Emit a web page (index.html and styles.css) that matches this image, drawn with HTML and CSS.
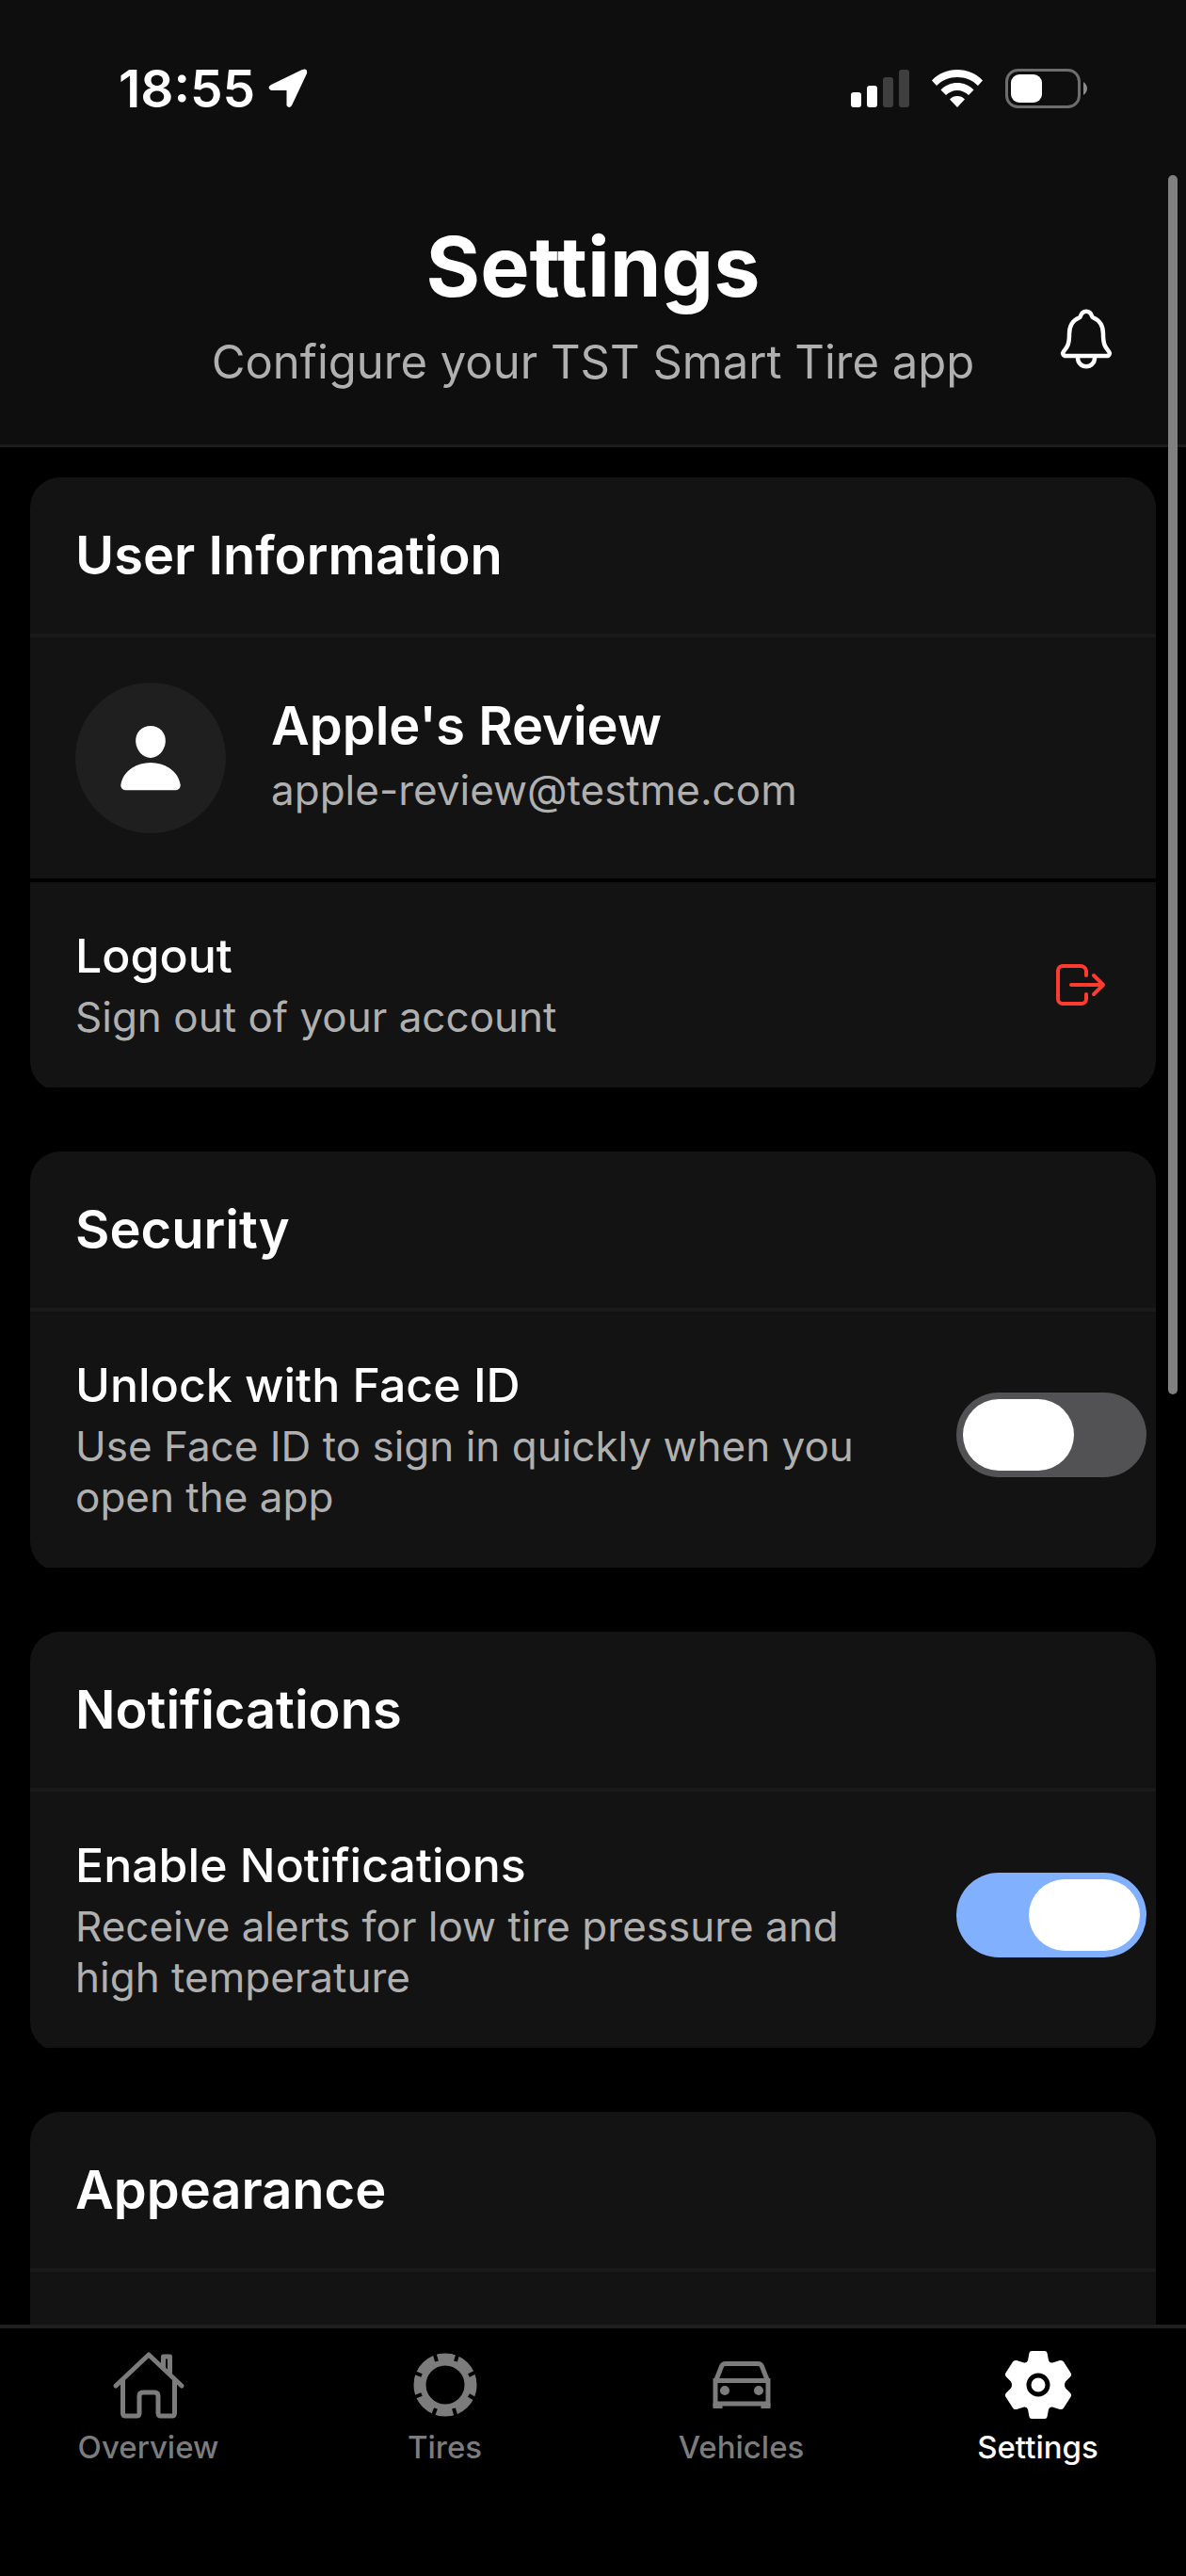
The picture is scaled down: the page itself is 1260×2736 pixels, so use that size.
FILE: index.html
```html
<!DOCTYPE html>
<html lang="en">
<head>
  <meta charset="UTF-8" />
  <meta name="viewport" content="width=device-width, initial-scale=1.0"/>
  <title>TST Smart Tire - Settings</title>
  <link rel="stylesheet" href="styles.css">
</head>
<body>
  <div class="app">
    <div class="status-bar">
      <div class="status-left">
        <span class="time">18:55</span>
        <svg class="location" viewBox="0 0 42 42" aria-hidden="true">
          <path d="M3 17 L36 1 Q42 -1 41 5 L25 39 Q22 43 19.500 39 L19.500 23 L3 23 Q-2 20 3 17z" fill="#fff"/>
        </svg>
      </div>
      <div class="status-right">
        <svg class="signal" viewBox="0 0 62 40" aria-hidden="true">
          <rect x="0" y="24" width="11" height="16" rx="3" fill="#fff"/>
          <rect x="17" y="17" width="11" height="23" rx="3" fill="#fff"/>
          <rect x="34" y="8" width="11" height="32" rx="3" fill="#3f3f3f"/>
          <rect x="51" y="0" width="11" height="40" rx="3" fill="#3f3f3f"/>
        </svg>
        <svg class="wifi" viewBox="0 0 54 40" aria-hidden="true">
          <path d="M27 0C16.500 0 7 4 0 11.500L5 17C11 11 18.500 8 27 8s16 3 22 9l5-5.500C47 4 37.500 0 27 0z" fill="#fff"/>
          <path d="M27 14C20.500 14 14 16.500 9.500 21.500L15 27C18 24 22.500 22 27 22s9 2 12 5l5.500-5.500C40 16.500 33.500 14 27 14z" fill="#fff"/>
          <path d="M27 28C24 28 21 29 19 31.500L27 40l8-8.500C33 29 30 28 27 28z" fill="#fff"/>
        </svg>
        <svg class="battery" viewBox="0 0 88 42" aria-hidden="true">
          <rect x="1.500" y="1.500" width="77" height="39" rx="12" fill="none" stroke="#6d6d6d" stroke-width="3"/>
          <rect x="6" y="6" width="33" height="30" rx="9" fill="#fff"/>
          <path d="M83 14Q87 17 87 21T83 28z" fill="#8a8a8a"/>
        </svg>
      </div>
    </div>

    <header class="header">
      <div class="header-text">
        <h1>Settings</h1>
        <p>Configure your TST Smart Tire app</p>
      </div>
      <button class="bell" type="button" aria-label="Notifications">
        <svg viewBox="0 0 512 512" fill="none" stroke="#fff" stroke-width="32" stroke-linecap="round" stroke-linejoin="round">
          <path d="M427.680 351.430C402 320 383.870 304 383.870 217.350 383.870 138 343.350 109.730 310 96c-4.430-1.820-8.600-6-9.950-10.550C294.200 65.540 277.800 48 256 48s-38.210 17.550-44 37.470c-1.350 4.600-5.520 8.710-9.950 10.530-33.390 13.750-73.870 41.920-73.870 121.350C128.130 304 110 320 84.320 351.430 73.680 364.450 83 384 101.610 384h308.880c18.510 0 27.770-19.610 17.190-32.570zM320 384v16a64 64 0 01-128 0v-16"/>
        </svg>
      </button>
    </header>

    <main class="content">
      <section class="card">
        <h2>User Information</h2>
        <div class="row user-row">
          <div class="avatar">
            <svg viewBox="0 0 512 512" fill="#fff" aria-hidden="true">
              <path d="M332.640 64.580C313.180 43.570 286 32 256 32c-30.160 0-57.430 11.500-76.800 32.380-19.580 21.110-29.120 49.800-26.880 80.780C156.760 206.280 203.270 256 256 256s99.160-49.710 103.670-110.820c2.270-30.700-7.330-59.330-27.030-80.600zM432 480H80a31 31 0 01-24.200-11.130c-6.500-7.770-9.120-18.380-7.180-29.110C57.060 392.940 83.400 353.610 124.800 326c36.780-24.510 83.370-38 131.200-38s94.420 13.500 131.200 38c41.400 27.600 67.740 66.930 76.180 113.750 1.940 10.730-.680 21.340-7.180 29.110A31 31 0 01432 480z"/>
            </svg>
          </div>
          <div class="user-text">
            <div class="user-name">Apple's Review</div>
            <div class="row-note">apple-review@testme.com</div>
          </div>
        </div>
        <button class="row logout" type="button">
          <span class="row-text">
            <span class="row-title">Logout</span>
            <span class="row-note">Sign out of your account</span>
          </span>
          <svg viewBox="0 0 512 512" fill="none" stroke="#ff3b30" stroke-width="32" stroke-linecap="round" stroke-linejoin="round" aria-hidden="true">
            <path d="M304 336v40a40 40 0 01-40 40H104a40 40 0 01-40-40V136a40 40 0 0140-40h152c22.090 0 48 17.910 48 40v40M368 336l80-80-80-80M176 256h256"/>
          </svg>
        </button>
      </section>

      <section class="card">
        <h2>Security</h2>
        <div class="row switch-row">
          <label class="row-text" for="faceId">
            <span class="row-title">Unlock with Face ID</span>
            <span class="row-note">Use Face ID to sign in quickly when you open the app</span>
          </label>
          <input class="switch" type="checkbox" id="faceId" />
        </div>
      </section>

      <section class="card">
        <h2>Notifications</h2>
        <div class="row switch-row">
          <label class="row-text" for="notifications">
            <span class="row-title">Enable Notifications</span>
            <span class="row-note">Receive alerts for low tire pressure and high temperature</span>
          </label>
          <input class="switch" type="checkbox" id="notifications" checked />
        </div>
      </section>

      <section class="card">
        <h2>Appearance</h2>
        <div class="row"></div>
      </section>
    </main>

    <nav class="tab-bar">
      <a class="tab" href="#overview">
        <svg viewBox="0 0 80 80" fill="none" stroke="currentColor" stroke-width="5" stroke-linecap="round" stroke-linejoin="round" aria-hidden="true">
          <path d="M5 41L40 8l35 33"/>
          <path d="M12.500 35v35q0 3 3 3H27q3 0 3-3V52q0-4 4-4h12q4 0 4 4v18q0 3 3 3h11.500q3 0 3-3V35"/>
          <path d="M55.500 22V10h7v18"/>
        </svg>
        <span>Overview</span>
      </a>
      <a class="tab" href="#tires">
        <svg viewBox="0 0 80 80" fill="none" stroke="currentColor" aria-hidden="true">
          <circle cx="40" cy="40" r="27" stroke-width="13"/>
          <path d="M31 15l-3-10M51 15l3-10M15 30l-10-4M15 50l-10 4M65 30l10-5M65 51l10 6M30 65l-4 10M49 65l3 10" stroke="#000" stroke-width="4"/>
        </svg>
        <span>Tires</span>
      </a>
      <a class="tab" href="#vehicles">
        <svg viewBox="0 0 80 80" fill="none" stroke="currentColor" stroke-width="5" aria-hidden="true">
          <path d="M12 37L18.500 20.500Q19.500 17.500 23 17.500H57q3.500 0 4.500 3L68 37"/>
          <path d="M12 35.500H68V60H12z"/>
          <path d="M14.500 60v5M65.500 60v5" stroke-width="10"/>
          <circle cx="22" cy="46" r="5" fill="currentColor" stroke="none"/>
          <circle cx="58" cy="46" r="5" fill="currentColor" stroke="none"/>
        </svg>
        <span>Vehicles</span>
      </a>
      <a class="tab active" href="#settings">
        <svg viewBox="0 0 80 80" aria-hidden="true">
          <path d="M30.500 6Q31 4 33 4H47Q49 4 49.500 6L51 14Q52 17 55 16.500L63 14Q66 13.500 67 15.500L75 28Q75.500 30 74 31.500L69 36.500Q67 40 69 43.500L74 48.500Q75.500 50 75 52L67 64.500Q66 66.500 63 66L55 63.500Q52 63 51 66L49.500 74Q49 76 47 76H33Q31 76 30.500 74L29 66Q28 63 25 63.500L17 66Q14 66.500 13 64.500L5 52Q4.500 50 6 48.500L11 43.500Q13 40 11 36.500L6 31.500Q4.500 30 5 28L13 15.500Q14 13.500 17 14L25 16.500Q28 17 29 14z" fill="currentColor"/>
          <circle cx="40" cy="40" r="10" fill="none" stroke="#000" stroke-width="5"/>
        </svg>
        <span>Settings</span>
      </a>
    </nav>

    <div class="scroll-thumb"></div>
  </div>
</body>
</html>
```
FILE: styles.css
```css
* {
  box-sizing: border-box;
}

body {
  margin: 0;
  background: #000;
  color: #fff;
  font-family: Inter, "Liberation Sans", sans-serif;
}

h1, h2, p {
  margin: 0;
}

svg {
  display: block;
}

button {
  padding: 0;
  border: none;
  background: none;
  color: inherit;
  font-family: inherit;
  text-align: left;
  cursor: pointer;
}

.app {
  position: relative;
  display: flex;
  flex-direction: column;
  height: 100vh;
}

/* Status bar */
.status-bar {
  display: flex;
  justify-content: space-between;
  align-items: center;
  height: 188px;
  padding: 0 104px 0 126px;
  background: #0e0e0e;
}

.status-left, .status-right {
  display: flex;
  align-items: center;
}

.status-left {
  gap: 14px;
}

.status-right {
  gap: 24px;
}

.time {
  font-size: 55px;
  font-weight: 600;
}

.location {
  width: 42px;
  height: 42px;
}

.signal {
  width: 62px;
  height: 40px;
}

.wifi {
  width: 54px;
  height: 40px;
}

.battery {
  width: 88px;
  height: 42px;
}

/* Header */
.header {
  display: grid;
  grid-template-columns: 1fr auto 1fr;
  align-items: end;
  padding: 40px 70px 56px;
  background: #0e0e0e;
  border-bottom: 3px solid #1b1b1b;
}

.header-text {
  grid-column: 2;
  text-align: center;
}

.header h1 {
  font-size: 88px;
  line-height: 110px;
  font-weight: 700;
}

.header p {
  margin-top: 16px;
  font-size: 49px;
  line-height: 62px;
  color: #b0b0b0;
}

.bell {
  justify-self: end;
  margin-bottom: 20px;
}

.bell svg {
  width: 72px;
  height: 72px;
}

/* Cards */
.content {
  flex: 1;
  min-height: 0;
  padding: 32px 32px 0;
  overflow: hidden;
}

.card {
  margin-bottom: 64px;
  background: #131313;
  border-radius: 32px;
  overflow: hidden;
}

.card h2 {
  padding: 48px;
  border-bottom: 4px solid #1a1a1a;
  font-size: 56px;
  line-height: 70px;
  font-weight: 600;
}

.row {
  display: flex;
  align-items: center;
  width: 100%;
  min-height: 200px;
  padding: 48px;
  border-bottom: 4px solid #000;
}

.avatar {
  display: flex;
  align-items: center;
  justify-content: center;
  width: 160px;
  height: 160px;
  margin-right: 48px;
  border-radius: 50%;
  background: #1f1f1f;
}

.avatar svg {
  width: 78px;
  height: 78px;
}

.user-text {
  padding-bottom: 6px;
}

.user-name {
  margin-bottom: 8px;
  font-size: 56px;
  line-height: 66px;
  font-weight: 600;
}

.row-text {
  flex: 1;
}

.row-title, .row-note {
  display: block;
}

.row-title {
  margin-bottom: 8px;
  font-size: 50px;
  line-height: 60px;
  font-weight: 500;
}

.row-note {
  font-size: 44px;
  line-height: 54px;
  font-weight: 400;
  color: #b0b0b0;
}

.logout svg {
  width: 64px;
  height: 64px;
}

/* Switches */
.switch-row {
  gap: 48px;
  padding-right: 10px;
}

.switch {
  appearance: none;
  display: flex;
  width: 202px;
  height: 90px;
  margin: 0 0 10px;
  padding: 7px;
  border-radius: 45px;
  background: #525254;
  cursor: pointer;
}

.switch::before {
  content: "";
  width: 118px;
  height: 76px;
  border-radius: 38px;
  background: #fff;
}

.switch:checked {
  justify-content: flex-end;
  background: #81b0ff;
}

/* Tab bar */
.tab-bar {
  display: flex;
  padding: 20px 0 117px;
  border-top: 4px solid #1f1f1f;
  background: #000;
}

.tab {
  display: flex;
  flex: 1;
  flex-direction: column;
  align-items: center;
  gap: 6px;
  color: #7c7c7c;
  font-size: 33px;
  line-height: 40px;
  font-weight: 500;
  text-decoration: none;
}

.tab.active {
  color: #fff;
}

.tab svg {
  width: 80px;
  height: 80px;
}

.scroll-thumb {
  position: absolute;
  top: 186px;
  right: 9px;
  width: 10px;
  height: 1295px;
  border-radius: 5px;
  background: #808080;
}
```
